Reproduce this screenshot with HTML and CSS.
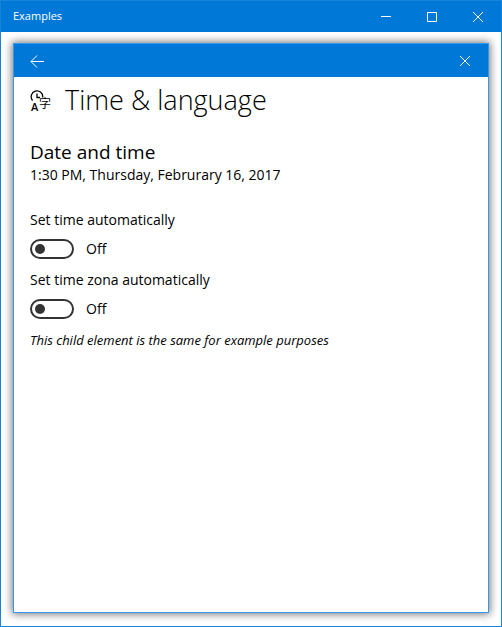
FILE: index.html
```html
<!DOCTYPE html>
<html lang="en">
<head>
<meta charset="utf-8">
<title>Examples</title>
<link rel="stylesheet" href="styles.css">
</head>
<body>
<div class="window">
  <header class="titlebar">
    <span class="caption">Examples</span>
    <button class="window-button" type="button" aria-label="Minimize"><svg width="12" height="12" viewBox="0 0 12 12"><path d="M1 5.5h10"/></svg></button>
    <button class="window-button" type="button" aria-label="Maximize"><svg width="12" height="12" viewBox="0 0 12 12"><path d="M1.5 1.5h9v9h-9z"/></svg></button>
    <button class="window-button" type="button" aria-label="Close"><svg width="12" height="12" viewBox="0 0 12 12"><path d="M1 1l10 10M11 1L1 11"/></svg></button>
  </header>
  <main class="stage">
    <section class="panel">
      <div class="panel-bar">
        <button class="panel-button" type="button" aria-label="Back"><svg width="14" height="14" viewBox="0 0 14 14"><path d="M14 7.5H1M7 1.5l-6 6 6 6"/></svg></button>
        <button class="panel-button" type="button" aria-label="Close panel"><svg width="12" height="12" viewBox="0 0 12 12"><path d="M1 1l10 10M11 1L1 11"/></svg></button>
      </div>
      <div class="content">
        <div class="heading">
          <svg class="heading-icon" width="22" height="24" viewBox="0 0 22 24" aria-hidden="true">
            <path d="M2.6 11.5A5.8 5.8 0 1 1 12.7 8.5M7 4.5v4h3"/>
            <text class="icon-latin" x="1" y="22">A</text>
            <text class="icon-cjk" x="9" y="19">字</text>
          </svg>
          <h1>Time &amp; language</h1>
        </div>
        <h2>Date and time</h2>
        <p class="date">1:30 PM, Thursday, Februrary 16, 2017</p>
        <div class="setting">
          <label for="auto-time">Set time automatically</label>
          <div class="switch-row"><input class="switch" id="auto-time" type="checkbox" role="switch"><span>Off</span></div>
        </div>
        <div class="setting">
          <label for="auto-zone">Set time zona automatically</label>
          <div class="switch-row"><input class="switch" id="auto-zone" type="checkbox" role="switch"><span>Off</span></div>
        </div>
        <p class="note">This child element is the same for example purposes</p>
      </div>
    </section>
  </main>
</div>
</body>
</html>
```
FILE: styles.css
```css
* { box-sizing: border-box; }
body {
  margin: 0;
  color: #000;
  background: #fff;
  font: 14px/20px "Open Sans", "Noto Sans", sans-serif;
}
h1, h2, p { margin: 0; font-weight: 400; }
.window {
  min-height: 100vh;
  display: flex;
  flex-direction: column;
  border: 1px solid #1883d7;
}
.titlebar {
  display: flex;
  align-items: center;
  height: 31px;
  padding-left: 12px;
  color: #fff;
  background: #0078d7;
}
.caption { flex: 1; font-size: 11px; line-height: 16px; padding-bottom: 2px; }
button {
  display: flex;
  align-items: center;
  justify-content: center;
  padding: 0;
  border: 0;
  color: #fff;
  background: transparent;
}
button svg { fill: none; stroke: currentColor; stroke-width: 1; }
.window-button { width: 46px; height: 30px; }
.stage { flex: 1; display: flex; padding: 11px 12px 13px; }
.panel {
  flex: 1;
  border: 1px solid #3399ee;
  background: #fff;
  box-shadow: 0 0 8px 1px rgba(0, 0, 0, 0.55);
}
.panel-bar {
  display: flex;
  justify-content: space-between;
  height: 33px;
  background: #0078d7;
}
.panel-button { width: 46px; height: 34px; }
.content { padding: 4px 16px; }
.heading { display: flex; align-items: center; gap: 13px; height: 40px; }
.heading h1 { font-size: 27px; line-height: 38px; padding-bottom: 2px; font-weight: 300; }
.heading-icon path { fill: none; stroke: #000; stroke-width: 1.3; }
.icon-latin { font: 600 11px "Open Sans", sans-serif; }
.icon-cjk { font: 400 12px "Noto Sans CJK JP", sans-serif; }
h2 { margin-top: 19px; font-size: 19px; line-height: 24px; }
.date { margin: 1px 0 24px; }
.setting { height: 60px; }
.setting label { display: block; padding-top: 1px; line-height: 20px; }
.switch-row { display: flex; align-items: center; gap: 12px; height: 38px; }
.switch {
  appearance: none;
  display: flex;
  align-items: center;
  width: 44px;
  height: 20px;
  margin: 0;
  padding: 0 3px;
  border: 2px solid #333;
  border-radius: 10px;
}
.switch::before {
  content: "";
  width: 10px;
  height: 10px;
  border-radius: 50%;
  background: #333;
}
.switch:checked::before { margin-left: auto; }
.note { padding-top: 1px; font-size: 13px; font-style: italic; }
```
